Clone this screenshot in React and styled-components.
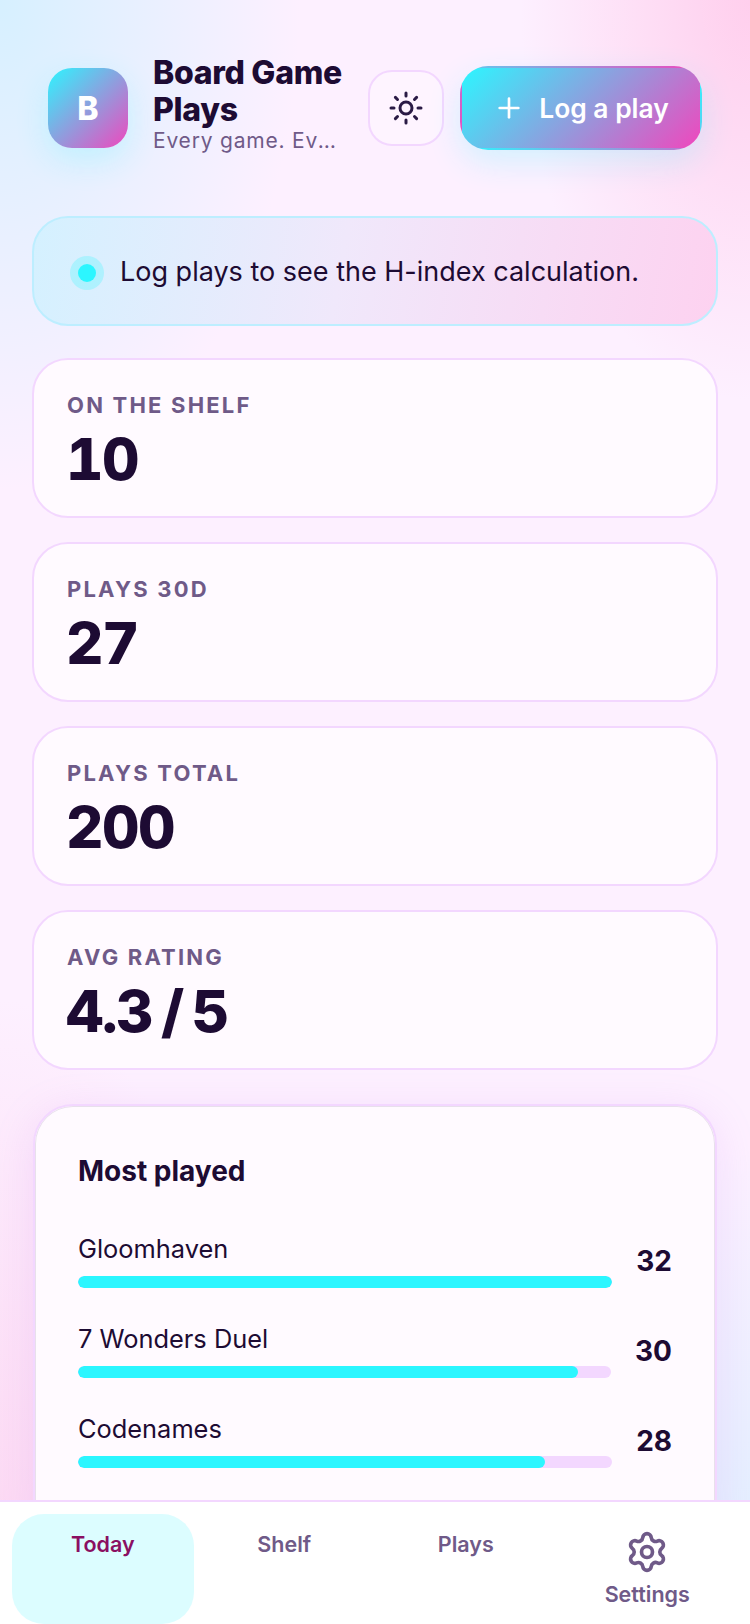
import React from "react";
import styled, { createGlobalStyle } from "styled-components";
import { Plus, Settings, Sun } from "lucide-react";

const Global = createGlobalStyle`
  html, body { margin: 0; padding: 0; background: #fdf0ff; }
  * { box-sizing: border-box; }
  body { font-family: Inter, "Noto Sans", sans-serif; color: #1d0b33; }
`;

const Shell = styled.div`
  width: 750px;
  height: 1624px;
  display: flex;
  flex-direction: column;
  overflow: hidden;
  background:
    radial-gradient(300px 490px at 0 0, rgba(212, 240, 255, 0.95), rgba(212, 240, 255, 0) 100%),
    radial-gradient(230px 400px at 100% 0, rgba(255, 205, 236, 0.95), rgba(255, 205, 236, 0) 100%),
    radial-gradient(260px 480px at 100% 100%, rgba(215, 238, 255, 0.85), rgba(215, 238, 255, 0) 100%),
    radial-gradient(260px 560px at 0 96%, rgba(252, 208, 238, 0.75), rgba(252, 208, 238, 0) 100%),
    #fdf0ff;
`;

const Main = styled.main`
  flex: 1;
  min-height: 0;
  overflow: hidden;
  padding: 54px 32px 0;
`;

const Header = styled.header`
  display: flex;
  align-items: center;
  gap: 24px;
  padding: 0 15px 0 16px;
  margin-bottom: 54px;
`;

const Logo = styled.div`
  width: 80px;
  height: 80px;
  flex: none;
  display: flex;
  align-items: center;
  justify-content: center;
  margin-right: 1px;
  border-radius: 24px;
  background: linear-gradient(135deg, #2cf6ff, #f047bd);
  color: #fff;
  font-size: 32px;
  font-weight: 800;
  box-shadow: 0 12px 32px rgba(44, 246, 255, 0.2);
`;

const Titles = styled.div`
  width: 191px;
  flex: none;
  min-width: 0;
  margin-bottom: 8px;
`;

const Title = styled.h1`
  margin: 0;
  font-size: 32px;
  line-height: 37px;
  font-weight: 800;
  letter-spacing: -0.3px;
`;

const Subtitle = styled.div`
  font-size: 21px;
  line-height: 26px;
  letter-spacing: 0.8px;
  color: #6f5a88;
  white-space: nowrap;
  overflow: hidden;
  text-overflow: ellipsis;
`;

const ThemeButton = styled.button`
  width: 76px;
  height: 76px;
  flex: none;
  display: flex;
  align-items: center;
  justify-content: center;
  padding: 0;
  border-radius: 24px;
  border: 2px solid #f3d7ff;
  background: #fef4ff;
  color: #2a1a45;
`;

const LogButton = styled.button`
  width: 242px;
  height: 84px;
  flex: none;
  margin-left: -8px;
  display: flex;
  align-items: center;
  justify-content: center;
  gap: 14px;
  padding: 0;
  border-radius: 28px;
  border: 2px solid transparent;
  background: linear-gradient(135deg, #2cf6ff, #f047bd);
  color: #fff;
  font: 600 26.4px Inter, sans-serif;
  box-shadow: 0 12px 32px rgba(44, 246, 255, 0.2);
`;

const Banner = styled.div`
  height: 110px;
  display: flex;
  align-items: center;
  gap: 16px;
  padding: 0 36px;
  margin-bottom: 32px;
  border-radius: 36px;
  border: 2px solid #bdeeff;
  background: linear-gradient(100deg, #d4f1ff, #f0e8fb 45%, #fdd2f0);
  font-size: 27px;
  white-space: nowrap;
`;

const Dot = styled.span`
  width: 18px;
  height: 18px;
  flex: none;
  margin: 3px 8px 0;
  border-radius: 50%;
  background: #2cf6ff;
  box-shadow: 0 0 0 8px rgba(44, 246, 255, 0.25);
`;

const Stat = styled.section`
  height: 160px;
  padding: 32px 32px 0;
  margin-bottom: 24px;
  border-radius: 36px;
  border: 2px solid #f3d7ff;
  background: #fffaff;
`;

const StatLabel = styled.div`
  padding-left: 1px;
  font-size: 22px;
  line-height: 26px;
  font-weight: 700;
  letter-spacing: 2.2px;
  color: #6f5a88;
`;

const StatValue = styled.div`
  margin-top: 7px;
  font-size: 58px;
  line-height: 68px;
  font-weight: 800;
  font-variant-numeric: tabular-nums;
  letter-spacing: -1.5px;
  word-spacing: -5px;
`;

const Panel = styled.section`
  margin: 34px 1px 0;
  padding: 47px 43px 40px;
  border-radius: 40px;
  border: 2px solid #f3d7ff;
  background: #fffaff;
  box-shadow:
    0 8px 40px rgba(200, 130, 240, 0.18),
    inset 0 0 0 1px rgba(150, 130, 170, 0.22);
`;

const PanelTitle = styled.h2`
  margin: 0 0 42px;
  font-size: 28px;
  line-height: 36px;
  font-weight: 700;
`;

const Row = styled.div`
  display: grid;
  grid-template-columns: 1fr auto;
  column-gap: 24px;
  align-items: center;
  margin-bottom: 33px;
`;

const RowName = styled.div`
  font-size: 25.4px;
  line-height: 36px;
  margin-bottom: 9px;
`;

const Track = styled.div`
  height: 12px;
  border-radius: 6px;
  background: #f3d7ff;
  overflow: hidden;
`;

const Fill = styled.div`
  height: 100%;
  border-radius: 6px;
  background: #2cf6ff;
`;

const RowCount = styled.div`
  padding-top: 3px;
  font-size: 28px;
  font-weight: 700;
`;

const Nav = styled.nav`
  flex: none;
  height: 124px;
  display: grid;
  grid-template-columns: repeat(4, 1fr);
  padding: 12px 12px 0;
  border-top: 2px solid #f3d7ff;
  background: #fff;
`;

const Tab = styled.div`
  display: flex;
  flex-direction: column;
  align-items: center;
  gap: 6px;
  padding-top: 16px;
  border-radius: 32px;
  background: ${(p) => (p.$active ? "#dcfdff" : "transparent")};
  color: ${(p) => (p.$active ? "#8a0f62" : "#6f5a88")};
  font-size: 21.5px;
  line-height: 28px;
  font-weight: 600;
`;

const games = [
  ["Gloomhaven", 32],
  ["7 Wonders Duel", 30],
  ["Codenames", 28],
];

const stats = [
  ["ON THE SHELF", "10"],
  ["PLAYS 30D", "27"],
  ["PLAYS TOTAL", "200"],
  ["AVG RATING", "4.3 / 5"],
];

export default function App() {
  return (
    <Shell>
      <Global />
      <Main>
        <Header>
          <Logo>B</Logo>
          <Titles>
            <Title>Board Game Plays</Title>
            <Subtitle>Every game. Every play.</Subtitle>
          </Titles>
          <ThemeButton aria-label="Theme">
            <Sun size={36} strokeWidth={2} />
          </ThemeButton>
          <LogButton>
            <Plus size={32} strokeWidth={2} />
            Log a play
          </LogButton>
        </Header>
        <Banner>
          <Dot />
          Log plays to see the H-index calculation.
        </Banner>
        {stats.map(([label, value]) => (
          <Stat key={label}>
            <StatLabel>{label}</StatLabel>
            <StatValue>{value}</StatValue>
          </Stat>
        ))}
        <Panel>
          <PanelTitle>Most played</PanelTitle>
          {games.map(([name, count]) => (
            <Row key={name}>
              <div>
                <RowName>{name}</RowName>
                <Track>
                  <Fill style={{ width: `${(count / 32) * 100}%` }} />
                </Track>
              </div>
              <RowCount>{count}</RowCount>
            </Row>
          ))}
        </Panel>
      </Main>
      <Nav>
        <Tab $active>Today</Tab>
        <Tab>Shelf</Tab>
        <Tab>Plays</Tab>
        <Tab>
          <Settings size={44} strokeWidth={2} />
          Settings
        </Tab>
      </Nav>
    </Shell>
  );
}
